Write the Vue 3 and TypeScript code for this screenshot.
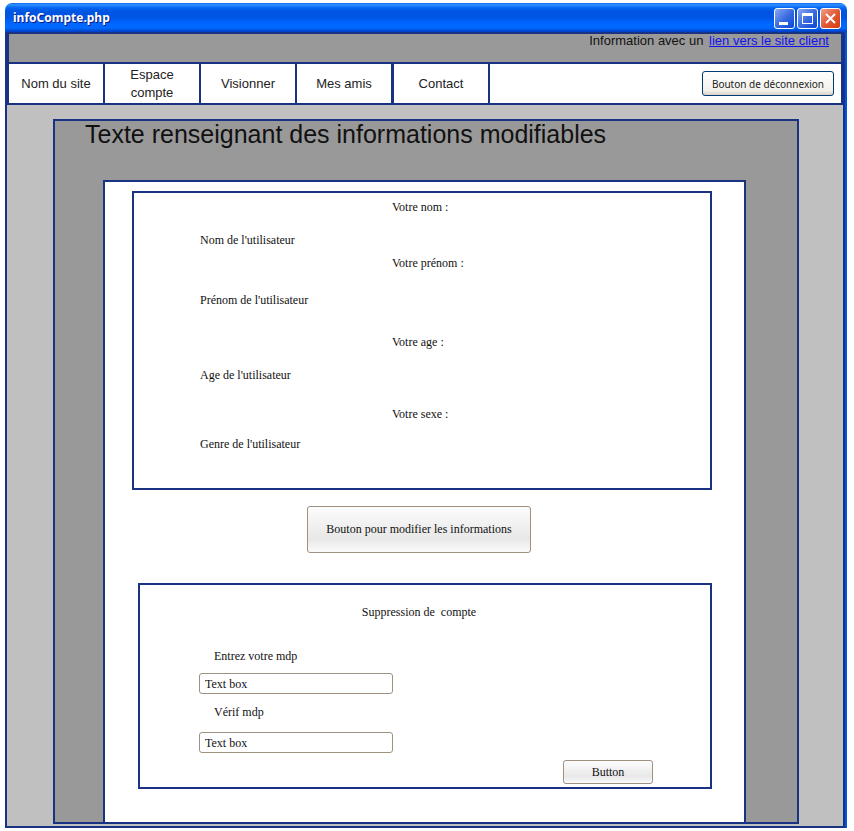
<script setup lang="ts">
import { ref } from 'vue'

interface Field {
  label: string
  value: string
}

const links: string[] = ['Nom du site', 'Espace compte', 'Visionner', 'Mes amis', 'Contact']

const fields: Field[] = [
  { label: 'Votre nom :', value: "Nom de l'utilisateur" },
  { label: 'Votre prénom :', value: "Prénom de l'utilisateur" },
  { label: 'Votre age :', value: "Age de l'utilisateur" },
  { label: 'Votre sexe :', value: "Genre de l'utilisateur" },
]

const password = ref('Text box')
const confirmation = ref('Text box')
</script>

<template>
  <div class="window">
    <header class="titlebar">
      <span class="titlebar-text">infoCompte.php</span>
      <div class="controls">
        <button class="control" type="button" aria-label="Réduire">
          <svg viewBox="0 0 19 19"><rect x="4" y="13" width="9" height="3" fill="#fff" /></svg>
        </button>
        <button class="control" type="button" aria-label="Agrandir">
          <svg viewBox="0 0 19 19">
            <path d="M4 4h11v11H4zM5 7v7h9V7z" fill="#fff" fill-rule="evenodd" />
          </svg>
        </button>
        <button class="control close" type="button" aria-label="Fermer">
          <svg viewBox="0 0 19 19">
            <path d="M5 5l9 9M14 5l-9 9" stroke="#fff" stroke-width="2" fill="none" />
          </svg>
        </button>
      </div>
    </header>

    <div class="frame">
      <div class="client">
        <div class="site-head">
          <p class="info">Information avec un <a href="#client">lien vers le site client</a></p>
          <div class="menu">
            <nav class="links">
              <a v-for="link in links" :key="link" href="#">{{ link }}</a>
            </nav>
            <button class="logout" type="button">Bouton de déconnexion</button>
          </div>
        </div>

        <main class="panel">
          <h1>Texte renseignant des informations modifiables</h1>
          <div class="sheet">
            <dl class="details">
              <template v-for="field in fields" :key="field.label">
                <dt>{{ field.label }}</dt>
                <dd>{{ field.value }}</dd>
              </template>
            </dl>

            <button class="soft edit" type="button">Bouton pour modifier les informations</button>

            <form class="removal" @submit.prevent>
              <h2>Suppression de&nbsp; compte</h2>
              <div class="entry">
                <label for="password">Entrez votre mdp</label>
                <input id="password" v-model="password" type="text" />
              </div>
              <div class="entry second">
                <label for="confirmation">Vérif mdp</label>
                <input id="confirmation" v-model="confirmation" type="text" />
              </div>
              <button class="soft submit" type="submit">Button</button>
            </form>
          </div>
        </main>
      </div>
    </div>
  </div>
</template>

<style>
body {
  background: #fff;
}
</style>

<style scoped>
* {
  box-sizing: border-box;
}

.window {
  margin: 3px 7px 3px 5px;
  color: #111;
  font: 12px/16px 'Liberation Serif', serif;
}

.titlebar {
  display: flex;
  align-items: center;
  justify-content: space-between;
  height: 29px;
  padding: 2px 6px 0 8px;
  border-radius: 7px 7px 0 0;
  background: linear-gradient(
    #0050dc 0,
    #2a8cff 1px,
    #2a8cff 2px,
    #0262ee 5px,
    #0054e0 9px,
    #0055e5 15px,
    #0066ff 20px,
    #0069ff 25px,
    #0052dd 27px,
    #003ec4 29px
  );
}

.titlebar-text {
  padding-bottom: 2px;
  color: #fff;
  font: bold 12px/20px 'Noto Sans', sans-serif;
  text-shadow: 1px 1px #0a1883;
}

.controls {
  display: flex;
  gap: 2px;
}

.control {
  width: 21px;
  height: 21px;
  padding: 0;
  border: 1px solid #fff;
  border-radius: 3px;
  background: linear-gradient(135deg, #8aa8f4, #3c6ce0 50%, #0a46d4);
}

.control.close {
  background: linear-gradient(135deg, #f0a088, #e25a38 50%, #d83a08);
}

.control svg {
  display: block;
  width: 19px;
  height: 19px;
}

.frame {
  padding-right: 2px;
  background: #0054e3;
}

.client {
  padding-bottom: 2px;
  border: 2px solid #1a3282;
  border-top: 0;
  background: #c0c0c0;
}

.site-head {
  border: 2px solid #1a3282;
  border-left-width: 2px;
  background: #999;
}

.info {
  height: 28px;
  margin: 0;
  padding-right: 12px;
  font: 13px/14px 'Liberation Sans', sans-serif;
  text-align: right;
}

.info a {
  margin-left: 2px;
  color: #1212f0;
}

.menu {
  display: flex;
  align-items: center;
  justify-content: space-between;
  min-height: 41px;
  padding-right: 7px;
  border-top: 2px solid #1a3282;
  background: #fff;
}

.links {
  display: flex;
  align-self: stretch;
}

.links a {
  display: flex;
  align-items: center;
  justify-content: center;
  width: 96px;
  padding: 0 8px;
  border-right: 2px solid #1a3282;
  color: #222;
  font: 13px/18px 'Liberation Sans', sans-serif;
  text-align: center;
  text-decoration: none;
}

.links a:last-child {
  width: 97px;
  border-left: 1px solid #1a3282;
}

.logout {
  height: 25px;
  padding: 0 9px;
  border: 1px solid #003c74;
  border-radius: 3px;
  background: linear-gradient(#fff, #f2f1ec 80%, #d8d2c8);
  color: #222;
  font: 10px/16px 'Noto Sans', sans-serif;
}

.panel {
  margin: 14px 44px 0 46px;
  padding: 0 51px 0 48px;
  border: 2px solid #1a3282;
  background: #999;
}

h1 {
  height: 59px;
  margin: 0 0 0 -18px;
  font: 25px/26px 'Liberation Sans', sans-serif;
}

.sheet {
  display: flex;
  flex-direction: column;
  padding: 9px 32px 33px 27px;
  border: 2px solid #1a3282;
  border-bottom: 0;
  background: #fff;
}

.details {
  display: grid;
  grid-template-rows: 33px 23px 37px 42px 33px 39px 30px 52px;
  margin: 0;
  padding-top: 6px;
  border: 2px solid #1a3282;
}

.details dt {
  padding-left: 258px;
}

.details dd {
  margin: 0;
  padding-left: 66px;
}

.soft {
  border: 1px solid #a09080;
  border-radius: 3px;
  background: linear-gradient(#fcfcfc, #e8e8e8 70%, #fafafa);
  color: #111;
  font: inherit;
}

.edit {
  align-self: center;
  height: 47px;
  margin: 16px 6px 30px 0;
  padding: 0 18px 2px;
}

.removal {
  display: flex;
  flex-direction: column;
  margin-left: 6px;
  padding: 19px 57px 3px 59px;
  border: 2px solid #1a3282;
}

h2 {
  margin: 0 14px 28px 0;
  font: inherit;
  text-align: center;
}

.entry {
  display: flex;
  flex-direction: column;
  gap: 9px;
}

.entry.second {
  gap: 12px;
  margin-top: 10px;
}

.entry label {
  padding-left: 15px;
}

.entry input {
  width: 194px;
  height: 21px;
  padding: 2px 5px 0;
  border: 1px solid #a09080;
  border-radius: 3px;
  background: #fff;
  color: #111;
  font: inherit;
}

.submit {
  align-self: flex-end;
  width: 90px;
  height: 24px;
  margin-top: 7px;
  padding: 0;
}
</style>
